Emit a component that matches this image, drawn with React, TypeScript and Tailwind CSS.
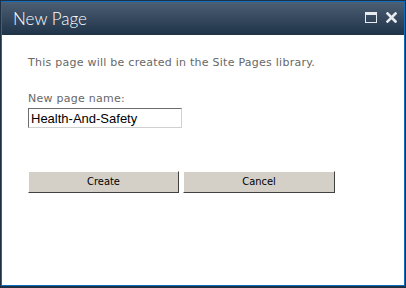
export default function App() {
  return (
    <div className="w-[406px] h-[288px] bg-[#1e3044] pt-px px-px pb-[2px]">
      <div className="h-full border border-[#0e6dbd] flex flex-col">
        {/* Title bar */}
        <div className="h-[33px] shrink-0 bg-gradient-to-b from-[#4d5f73] to-[#1f3349] flex items-start justify-between pl-[11px] pr-[7px]">
          <span
            className="pt-[7px] text-[17px] leading-[20px] font-light text-white"
            style={{ fontFamily: 'Lato, "Open Sans", sans-serif' }}
          >
            New Page
          </span>
          <div className="flex items-center gap-[9px] pt-[10px]">
            <svg width="12" height="11" viewBox="0 0 12 11">
              <rect x="0.5" y="0.5" width="11" height="10" fill="none" stroke="#e8ecf0" />
              <rect x="1" y="1" width="10" height="2" fill="#e8ecf0" />
            </svg>
            <svg width="11" height="11" viewBox="0 0 11 11">
              <path d="M1.5 1.5 L9.5 9.5 M9.5 1.5 L1.5 9.5" stroke="#e8ecf0" strokeWidth="2.6" strokeLinecap="square" />
            </svg>
          </div>
        </div>

        {/* Body */}
        <div
          className="flex-1 bg-white pl-[26px] pt-[21px] text-[11px] tracking-[0.25px] text-[#676767]"
          style={{ fontFamily: '"DejaVu Sans", Verdana, sans-serif' }}
        >
          <p className="leading-[13px]">This page will be created in the Site Pages library.</p>
          <p className="mt-[23px] leading-[13px]">New page name:</p>
          <input
            defaultValue="Health-And-Safety"
            className="block mt-[3px] w-[154px] h-[20px] px-[2px] border border-t-[#6d6d6d] border-l-[#6d6d6d] border-r-[#d0d0d0] border-b-[#d0d0d0] text-[13px] tracking-normal text-black outline-none"
            style={{ fontFamily: '"Liberation Sans", Arial, sans-serif' }}
          />
          <div className="flex gap-[4px] mt-[43px]">
            <button
              type="button"
              className="w-[151px] h-[22px] bg-[#d4d0c8] border border-t-white border-l-white border-r-[#404040] border-b-[#404040] text-[11px] tracking-normal text-black"
              style={{ fontFamily: '"DejaVu Sans Condensed", Tahoma, sans-serif' }}
            >
              Create
            </button>
            <button
              type="button"
              className="w-[152px] h-[22px] bg-[#d4d0c8] border border-t-white border-l-white border-r-[#404040] border-b-[#404040] text-[11px] tracking-normal text-black"
              style={{ fontFamily: '"DejaVu Sans Condensed", Tahoma, sans-serif' }}
            >
              Cancel
            </button>
          </div>
        </div>
      </div>
    </div>
  );
}
